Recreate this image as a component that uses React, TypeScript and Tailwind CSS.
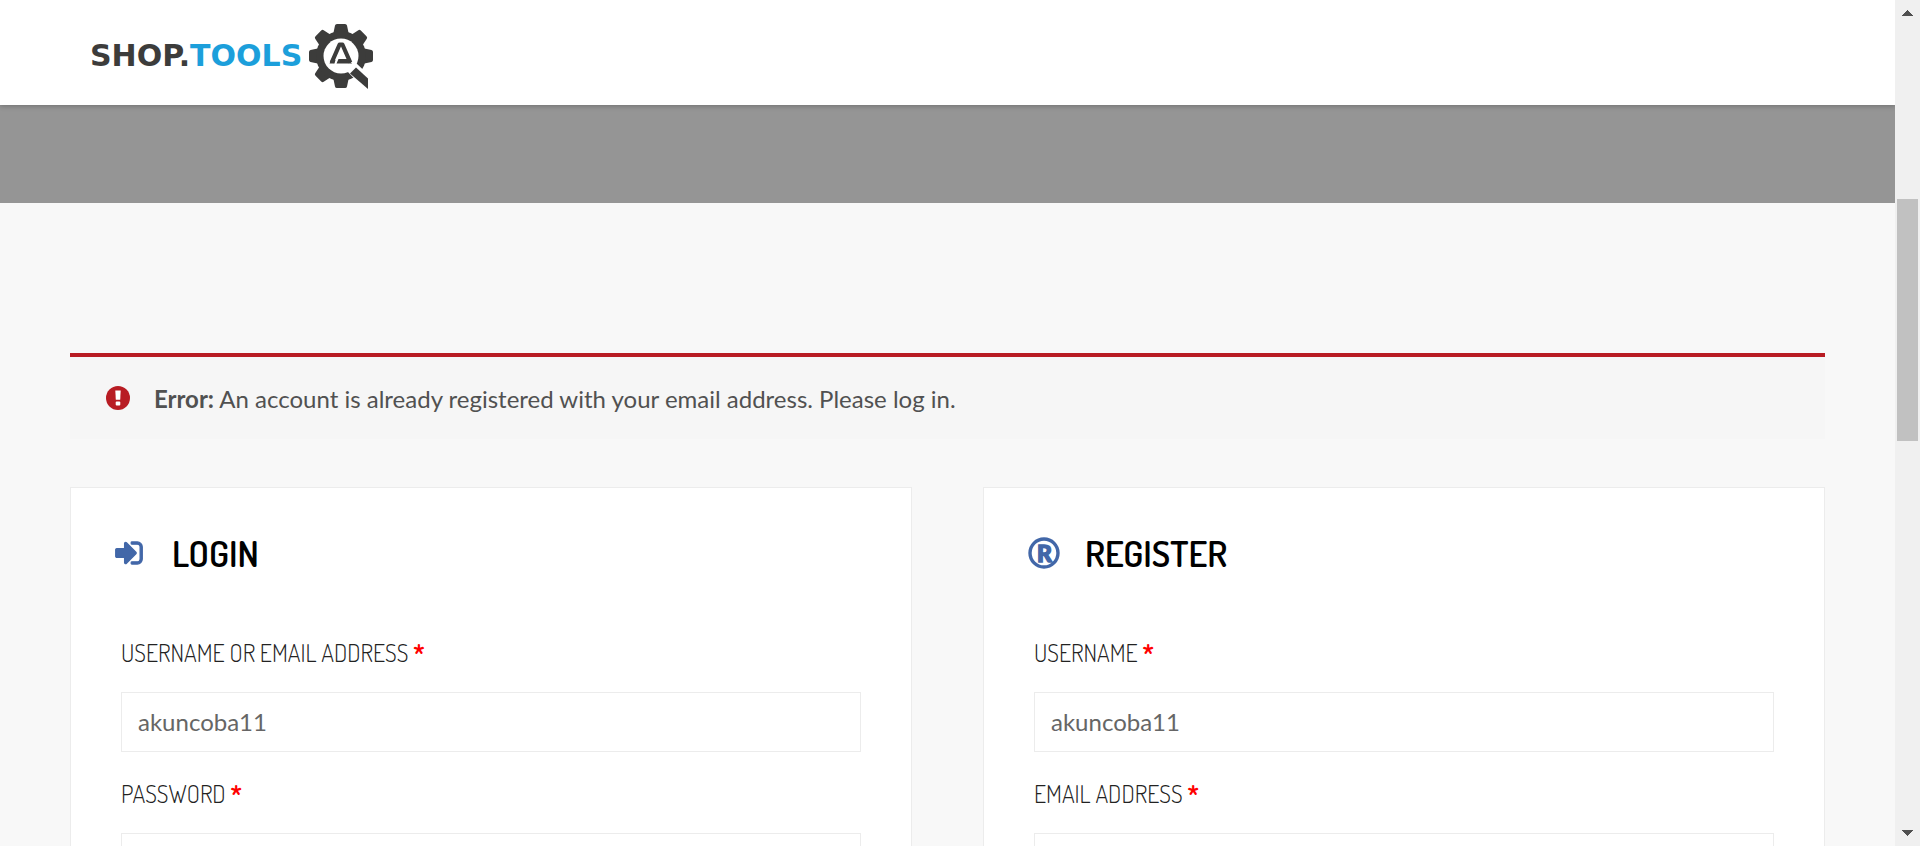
import React from 'react';

const narrow = "font-['Dosis','Roboto_Condensed','Liberation_Sans_Narrow','Lato',sans-serif]";

const teeth = [0, 45, 90, 180, 225, 270, 315];

function GearMark() {
  return (
    <svg viewBox="0 0 66 66" className="h-[66px] w-[66px]" aria-hidden="true">
      <g fill="#3c3c3b">
        {teeth.map((angle) => (
          <path
            key={angle}
            d="M25 12 L27 2.5 Q27.3 1 29 1 H37 Q38.7 1 39 2.5 L41 12 Z"
            transform={`rotate(${angle} 33 33)`}
          />
        ))}
        <circle cx="33" cy="33" r="25" />
      </g>
      <circle cx="33" cy="33" r="17.5" fill="#fff" />
      <path d="M39 48 L48 40 L66 57 V66 H56 Z" fill="#fff" />
      <path d="M42 50.500 L48 44.500 L60 55.500 V66 Z" fill="#3c3c3b" />
      <path
        d="M23.700 39.500 L31.600 21.500 H34.400 L42.300 39.500"
        fill="none"
        stroke="#3c3c3b"
        strokeWidth="4.200"
        strokeLinejoin="round"
      />
      <path d="M21.500 40.500 H26.500 L27.500 37 H23 Z M28.500 40.500 L30.500 36 H40 L44 40.500 Z" fill="#3c3c3b" />
    </svg>
  );
}

function AlertIcon() {
  return (
    <svg viewBox="0 0 24 24" className="mr-6 h-6 w-6" aria-hidden="true">
      <circle cx="12" cy="12" r="12" fill="#b81c23" />
      <path d="M9.300 4.500 H14.700 L14.200 13.800 H9.800 Z" fill="#fff" />
      <rect x="9.700" y="15.500" width="4.600" height="4" rx="1" fill="#fff" />
    </svg>
  );
}

function SignInIcon() {
  return (
    <svg
      viewBox="-40 216 1616 1360"
      className="h-6 w-7"
      fill="currentColor"
      stroke="currentColor"
      strokeWidth="70"
      aria-hidden="true"
    >
      <path d="M1184 896q0 26-19 45l-544 544q-19 19-45 19t-45-19-19-45v-288h-448q-26 0-45-19t-19-45v-384q0-26 19-45t45-19h448v-288q0-26 19-45t45-19 45 19l544 544q19 19 19 45zm352-352v704q0 119-84.5 203.5t-203.5 84.5h-320q-13 0-22.5-9.5t-9.5-22.5q0-4-1-20t-.5-26.500 3-23.500 10-19.500 20.500-6.500h320q66 0 113-47t47-113v-704q0-66-47-113t-113-47h-312l-11.500-1-11.500-3-8-5.500-7-9-2-13.500q0-4-1-20t-.5-26.500 3-23.500 10-19.500 20.500-6.500h320q119 0 203.500 84.500t84.500 203.500z" />
    </svg>
  );
}

function RegisteredIcon() {
  return (
    <svg viewBox="0 0 32 32" className="h-8 w-8" fill="currentColor" aria-hidden="true">
      <circle cx="16" cy="16" r="14" fill="none" stroke="currentColor" strokeWidth="3.400" />
      <text
        x="16.500"
        y="24.500"
        textAnchor="middle"
        stroke="currentColor"
        strokeWidth="1.400"
        className="font-['Lato',sans-serif] text-[23px] font-black"
      >
        R
      </text>
    </svg>
  );
}

type FieldProps = { id: string; label: string; type?: string; value?: string };

function Field({ id, label, type = 'text', value }: FieldProps) {
  return (
    <div className="mb-[26px]">
      <label htmlFor={id} className={`${narrow} block h-[55px] text-2xl leading-8 font-light text-[#222] uppercase`}>
        {label} <span className="font-bold text-[#f00]">*</span>
      </label>
      <input
        id={id}
        type={type}
        defaultValue={value}
        className="block h-[60px] w-full border border-[#ececec] bg-white px-4 pb-0.5 text-2xl text-[#666] outline-none"
      />
    </div>
  );
}

type CardProps = { title: string; icon: React.ReactNode; children: React.ReactNode };

function Card({ title, icon, children }: CardProps) {
  return (
    <section className="flex-1 border border-[#ececec] bg-white px-[50px] pt-[43px]">
      <div className="-ml-1.5 flex h-11 items-center">
        <span className="flex w-[57px] items-center text-[#4267a8]">{icon}</span>
        <h2 className={`${narrow} text-4xl font-semibold text-black uppercase`}>{title}</h2>
      </div>
      <form className="pt-[62px]">{children}</form>
    </section>
  );
}

function Scrollbar() {
  return (
    <div className="flex w-[25px] shrink-0 flex-col items-center justify-between bg-[#f0f0f0] py-2.5" aria-hidden="true">
      <svg viewBox="0 0 11 6" className="h-1.5 w-[11px] shrink-0" fill="#505050" shapeRendering="crispEdges">
        <path d="M5.500 0 L11 6 H0 Z" />
      </svg>
      <div className="flex w-full flex-1 flex-col items-center">
        <div className="h-[183px] shrink-0" />
        <div className="h-[242px] w-[21px] shrink-0 bg-[#c1c1c1]" />
      </div>
      <svg viewBox="0 0 11 6" className="h-1.5 w-[11px] shrink-0" fill="#505050" shapeRendering="crispEdges">
        <path d="M0 0 H11 L5.500 6 Z" />
      </svg>
    </div>
  );
}

export default function App() {
  return (
    <div className="flex h-screen overflow-hidden bg-[#f8f8f8] font-['Lato',sans-serif]">
      <div className="min-w-0 flex-1 overflow-hidden">
        <header className="relative flex h-[105px] items-center bg-white px-[90px] pt-1.5 shadow-[0_1px_5px_rgba(0,0,0,0.25)]">
          <a href="#" className="flex items-center gap-1.5">
            <span className="font-['DejaVu_Sans',sans-serif] text-[30px] leading-8 font-bold text-[#3c3c3b]">
              SHOP.<span className="text-[#1c9fdb]">TOOLS</span>
            </span>
            <GearMark />
          </a>
        </header>
        <div className="h-[98px] bg-[#959595]" />
        <main className="px-[70px] pt-[150px]">
          <div role="alert" className="flex h-[86px] items-center border-t-4 border-[#b81c23] bg-[#f6f6f6] px-9 text-2xl text-[#515151]">
            <AlertIcon />
            <p className="pt-0.5">
              <strong className="font-bold">Error:</strong> An account is already registered with your email address. Please log in.
            </p>
          </div>
          <div className="mt-12 flex gap-[71px]">
            <Card title="Login" icon={<SignInIcon />}>
              <Field id="login-user" label="Username or email address" value="akuncoba11" />
              <Field id="login-password" label="Password" type="password" />
            </Card>
            <Card title="Register" icon={<RegisteredIcon />}>
              <Field id="register-user" label="Username" value="akuncoba11" />
              <Field id="register-email" label="Email address" type="email" />
            </Card>
          </div>
        </main>
      </div>
      <Scrollbar />
    </div>
  );
}
